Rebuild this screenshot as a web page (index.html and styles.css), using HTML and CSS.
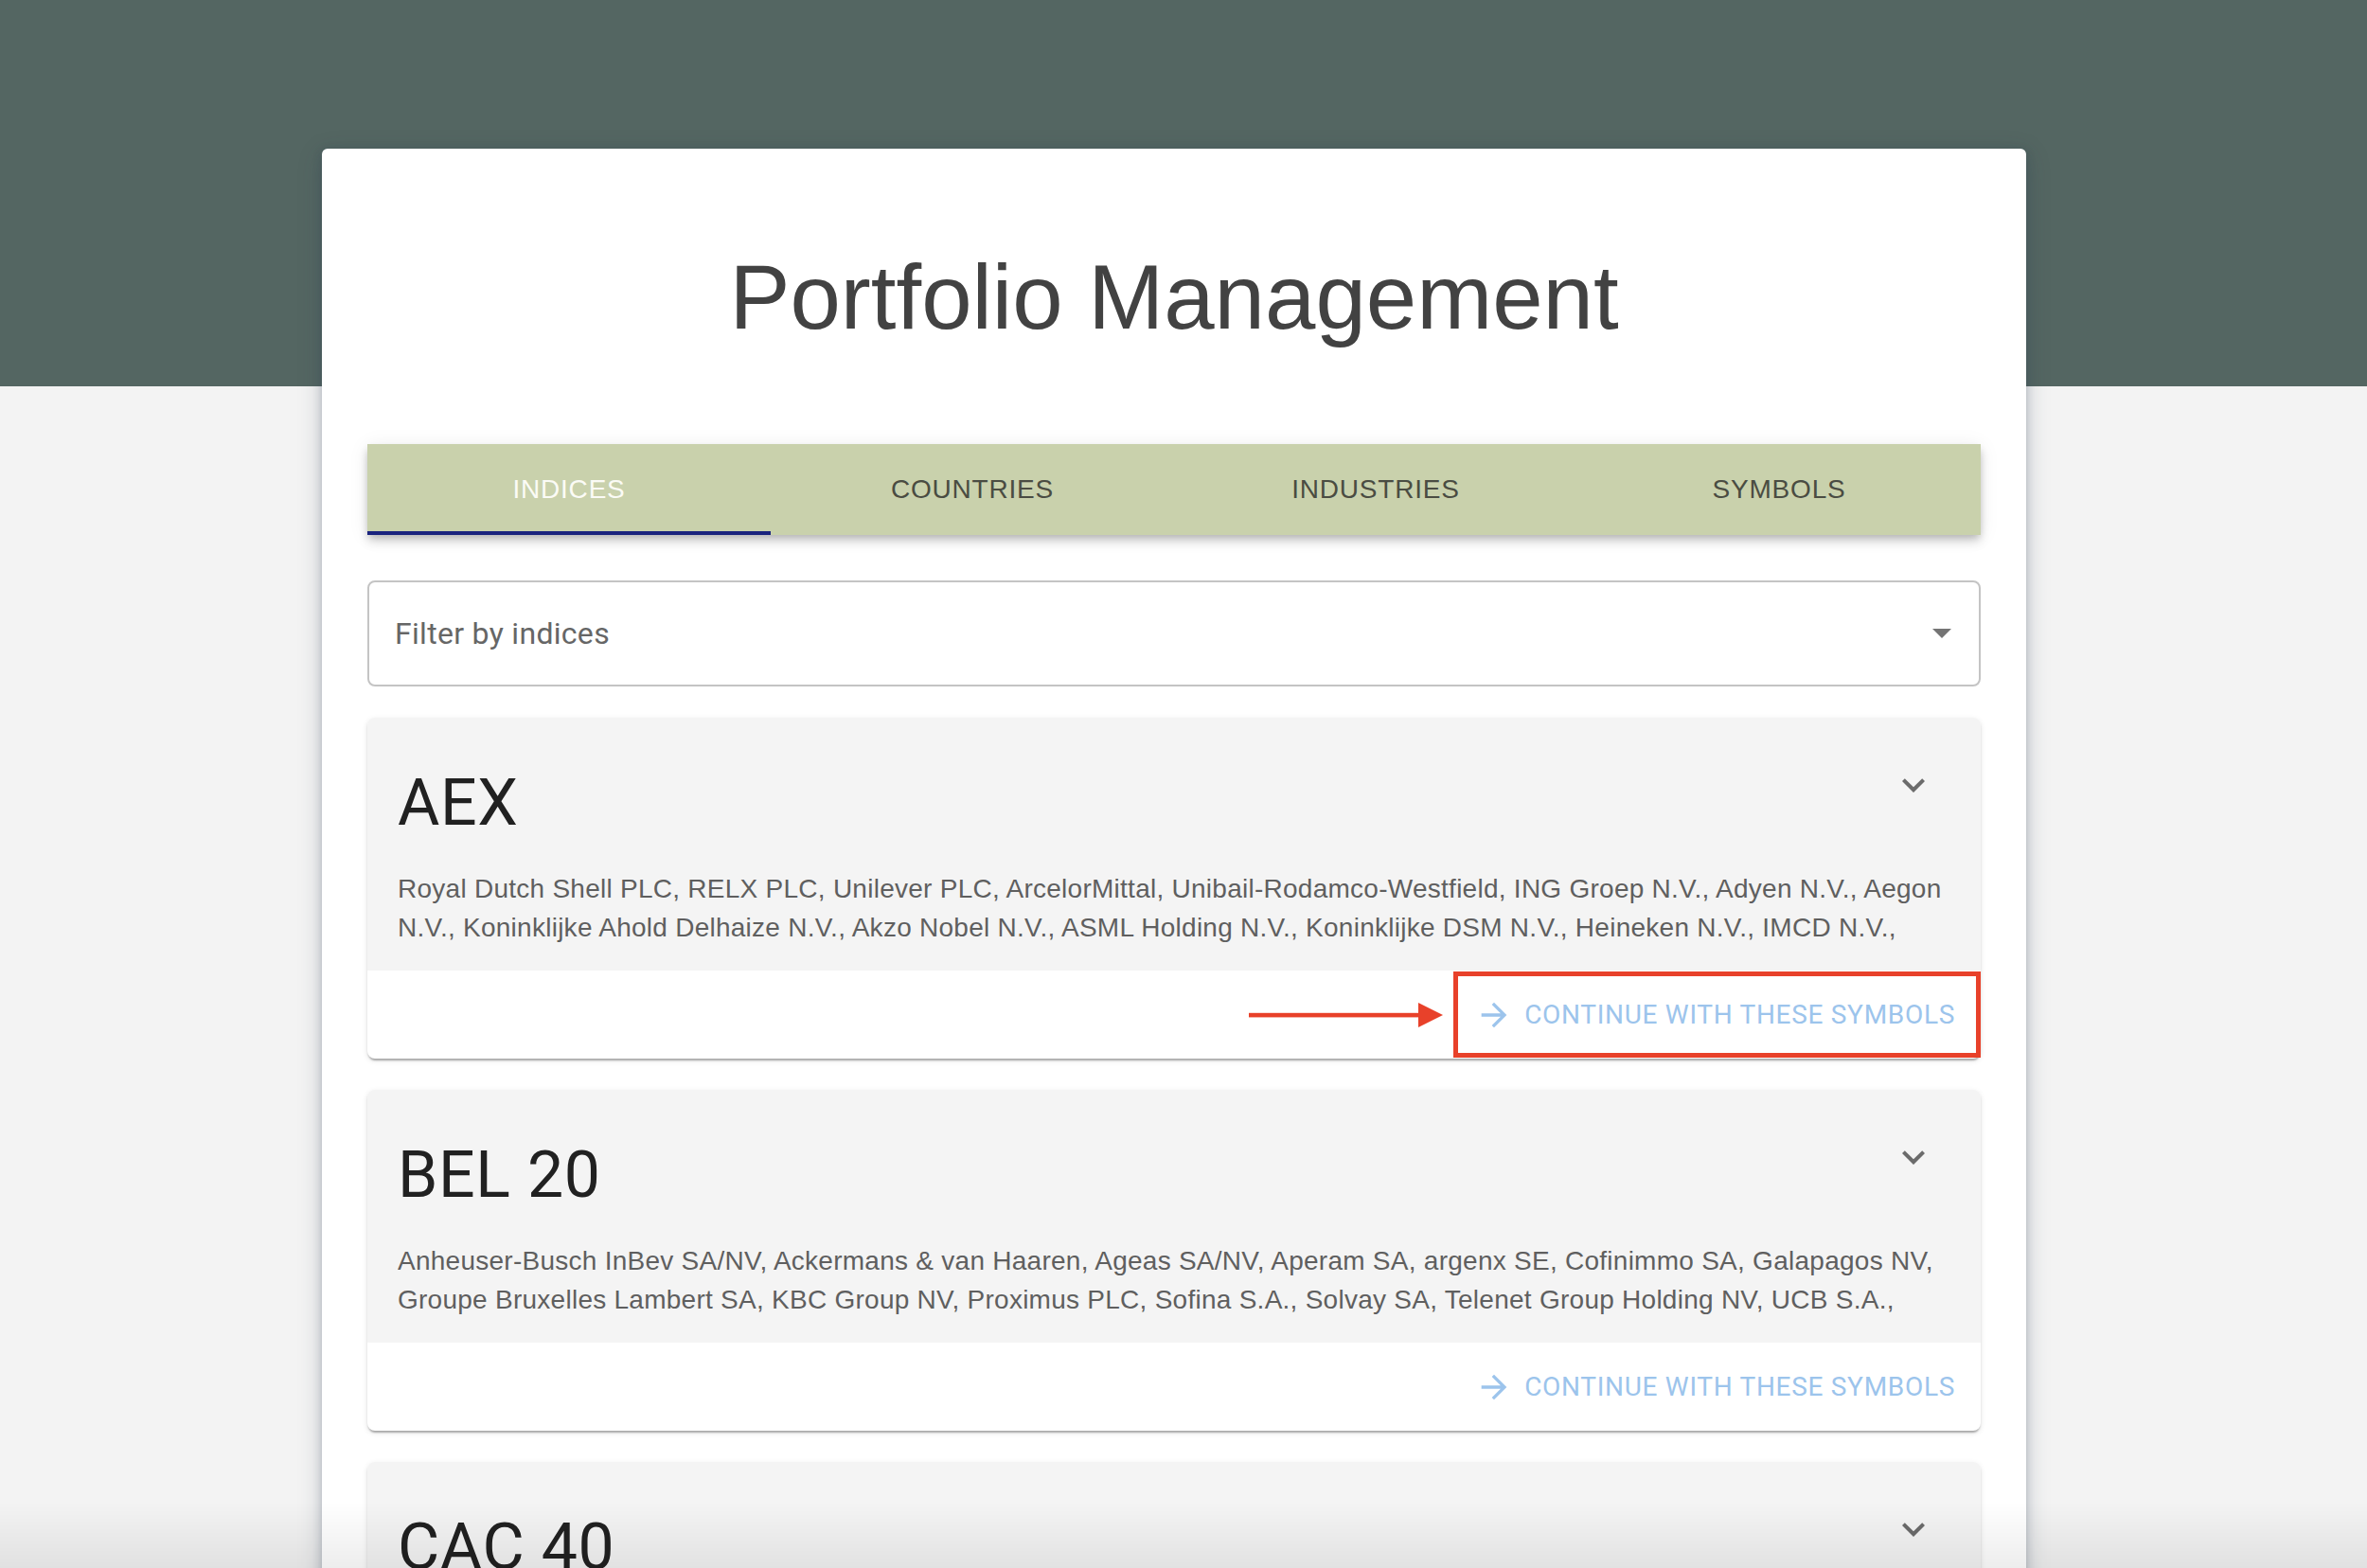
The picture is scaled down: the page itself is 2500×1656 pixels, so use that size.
FILE: index.html
```html
<!DOCTYPE html>
<html lang="en">
<head>
<meta charset="utf-8">
<title>Portfolio Management</title>
<link rel="stylesheet" href="styles.css">
</head>
<body>
<div class="page">
  <main class="sheet">
    <h1 class="title">Portfolio Management</h1>

    <nav class="tabs">
      <div class="tab active">INDICES</div>
      <div class="tab">COUNTRIES</div>
      <div class="tab">INDUSTRIES</div>
      <div class="tab">SYMBOLS</div>
    </nav>

    <div class="filter">
      <span class="filter-label">Filter by indices</span>
      <svg class="drop" width="20" height="10" viewBox="0 0 20 10"><path d="M0 0 L10 10 L20 0 Z" fill="#747474"/></svg>
    </div>

    <section class="card">
      <div class="card-main">
        <div class="card-head">
          <h2 class="card-title">AEX</h2>
          <svg class="chev" width="48" height="48" viewBox="0 0 24 24"><path d="M16.59 8.59L12 13.17 7.41 8.59 6 10l6 6 6-6z" fill="#6b6b6b"/></svg>
        </div>
        <p class="card-text">Royal Dutch Shell PLC, RELX PLC, Unilever PLC, ArcelorMittal, Unibail-Rodamco-Westfield, ING Groep N.V., Adyen N.V., Aegon N.V., Koninklijke Ahold Delhaize N.V., Akzo Nobel N.V., ASML Holding N.V., Koninklijke DSM N.V., Heineken N.V., IMCD N.V., Koninklijke KPN N.V., NN Group N.V., Koninklijke Philips N.V., Prosus N.V., Randstad N.V., Wolters Kluwer N.V.,</p>
      </div>
      <div class="card-actions">
        <button class="continue">
          <svg class="arrow" width="40" height="40" viewBox="0 0 24 24"><path d="M12 4l-1.41 1.41L16.17 11H4v2h12.17l-5.58 5.59L12 20l8-8z" fill="#9cc4ec"/></svg>
          <span>CONTINUE WITH THESE SYMBOLS</span>
        </button>
      </div>
      <div class="mark-box"></div>
      <svg class="mark-arrow" width="206" height="26" viewBox="0 0 206 26"><rect x="0" y="10.8" width="182" height="4.6" fill="#e8412a"/><polygon points="179,0 205,13 179,26" fill="#e8412a"/></svg>
    </section>

    <section class="card">
      <div class="card-main">
        <div class="card-head">
          <h2 class="card-title">BEL 20</h2>
          <svg class="chev" width="48" height="48" viewBox="0 0 24 24"><path d="M16.59 8.59L12 13.17 7.41 8.59 6 10l6 6 6-6z" fill="#6b6b6b"/></svg>
        </div>
        <p class="card-text">Anheuser-Busch InBev SA/NV, Ackermans &amp; van Haaren, Ageas SA/NV, Aperam SA, argenx SE, Cofinimmo SA, Galapagos NV, Groupe Bruxelles Lambert SA, KBC Group NV, Proximus PLC, Sofina S.A., Solvay SA, Telenet Group Holding NV, UCB S.A., Umicore SA, Warehouses De Pauw, Elia Group, Colruyt, Barco, Aedifica,</p>
      </div>
      <div class="card-actions">
        <button class="continue">
          <svg class="arrow" width="40" height="40" viewBox="0 0 24 24"><path d="M12 4l-1.41 1.41L16.17 11H4v2h12.17l-5.58 5.59L12 20l8-8z" fill="#9cc4ec"/></svg>
          <span>CONTINUE WITH THESE SYMBOLS</span>
        </button>
      </div>
    </section>

    <section class="card">
      <div class="card-main">
        <div class="card-head">
          <h2 class="card-title">CAC 40</h2>
          <svg class="chev" width="48" height="48" viewBox="0 0 24 24"><path d="M16.59 8.59L12 13.17 7.41 8.59 6 10l6 6 6-6z" fill="#6b6b6b"/></svg>
        </div>
        <p class="card-text">Accor SA, Air Liquide SA, Airbus SE, ArcelorMittal SA, Atos SE, AXA SA, BNP Paribas SA, Bouygues SA, Capgemini SE, Carrefour SA, Credit Agricole SA, Danone SA, Dassault Systemes SE, Engie SA, EssilorLuxottica SA, Hermes International SCA, Kering SA, L'Oreal SA, Legrand SA, LVMH,</p>
      </div>
      <div class="card-actions">
        <button class="continue">
          <svg class="arrow" width="40" height="40" viewBox="0 0 24 24"><path d="M12 4l-1.41 1.41L16.17 11H4v2h12.17l-5.58 5.59L12 20l8-8z" fill="#9cc4ec"/></svg>
          <span>CONTINUE WITH THESE SYMBOLS</span>
        </button>
      </div>
    </section>
  </main>
</div>
<div class="bottom-fade"></div>
</body>
</html>
```

FILE: styles.css
```css
* { box-sizing: border-box; }

html, body {
  margin: 0;
  padding: 0;
}

body {
  font-family: Roboto, "Liberation Sans", Arial, sans-serif;
  background: linear-gradient(to bottom, #546662 0, #546662 408px, #f3f3f3 408px, #f3f3f3 100%);
  min-height: 1656px;
  overflow: hidden;
}

.page {
  padding-top: 157px;
}

.sheet {
  width: 1800px;
  margin-left: 340px;
  background: #ffffff;
  border-radius: 6px;
  padding: 0 48px 40px;
  box-shadow: 0 2px 10px rgba(40, 60, 80, 0.25), 0 6px 26px rgba(40, 60, 80, 0.22);
}

.title {
  margin: 0;
  padding-top: 101px;
  font-family: "Liberation Sans", Arial, sans-serif;
  font-size: 96px;
  line-height: 112px;
  font-weight: 400;
  color: #424242;
  text-align: center;
  letter-spacing: 0;
}

.tabs {
  margin-top: 99px;
  height: 96px;
  display: grid;
  grid-template-columns: repeat(4, 1fr);
  background: #c9d1ac;
  box-shadow: 0 4px 8px -2px rgba(0, 0, 0, 0.2), 0 8px 10px 0 rgba(0, 0, 0, 0.1), 0 2px 20px 0 rgba(0, 0, 0, 0.08);
}

.tab {
  display: flex;
  align-items: center;
  justify-content: center;
  font-family: "Liberation Sans", Arial, sans-serif;
  font-size: 28px;
  font-weight: 400;
  letter-spacing: 0.8px;
  color: #4a4c42;
}

.tab.active {
  color: #fbfbf6;
  box-shadow: inset 0 -4px 0 #1a237e;
}

.filter {
  margin-top: 48px;
  height: 112px;
  border: 2px solid #c4c4c4;
  border-radius: 8px;
  display: flex;
  align-items: center;
  justify-content: space-between;
  padding: 0 29px 0 27px;
}

.filter-label {
  font-size: 32px;
  color: #666666;
  letter-spacing: 0.3px;
}

.drop { display: block; }

.card {
  position: relative;
  margin-top: 33px;
  height: 360px;
  border-radius: 8px;
  background: #ffffff;
  box-shadow: 0 4px 2px -2px rgba(0, 0, 0, 0.2), 0 2px 2px 0 rgba(0, 0, 0, 0.12), 0 2px 6px 0 rgba(0, 0, 0, 0.1);
  display: flex;
  flex-direction: column;
}

.card-main {
  background: #f4f4f4;
  height: 267px;
  padding: 48px 47px 0 32px;
  border-radius: 8px 8px 0 0;
}

.card-head {
  display: flex;
  justify-content: space-between;
  align-items: flex-start;
}

.card-title {
  margin: 0;
  font-size: 68px;
  line-height: 84px;
  font-weight: 400;
  color: #212121;
  letter-spacing: 0.6px;
}

.chev {
  display: block;
  margin-top: -1px;
}

.card-text {
  margin: 28px -15px 0 0;
  font-family: "Liberation Sans", Arial, sans-serif;
  font-size: 28px;
  line-height: 41px;
  height: 77px;
  overflow: hidden;
  color: #5f5f5f;
  letter-spacing: 0.26px;
}

.card-actions {
  flex: 1;
  display: flex;
  align-items: center;
  justify-content: flex-end;
  padding: 0 16px;
}

.continue {
  display: flex;
  align-items: center;
  border: 0;
  background: transparent;
  padding: 12px 11px 12px 16px;
  font-family: Roboto, "Liberation Sans", Arial, sans-serif;
  font-size: 28px;
  font-weight: 400;
  letter-spacing: 0.7px;
  color: #9cc4ec;
  cursor: pointer;
}

.arrow {
  display: block;
  margin-left: -8px;
  margin-right: 12px;
}

.mark-box {
  position: absolute;
  left: 1147px;
  top: 268px;
  width: 557px;
  height: 91px;
  border: 5px solid #e8412a;
  pointer-events: none;
}

.mark-arrow {
  position: absolute;
  left: 931px;
  top: 301px;
  pointer-events: none;
}

.bottom-fade {
  position: fixed;
  left: 0;
  right: 0;
  bottom: 0;
  height: 70px;
  background: linear-gradient(to bottom, rgba(0, 0, 0, 0), rgba(0, 0, 0, 0.07));
  pointer-events: none;
}
```
